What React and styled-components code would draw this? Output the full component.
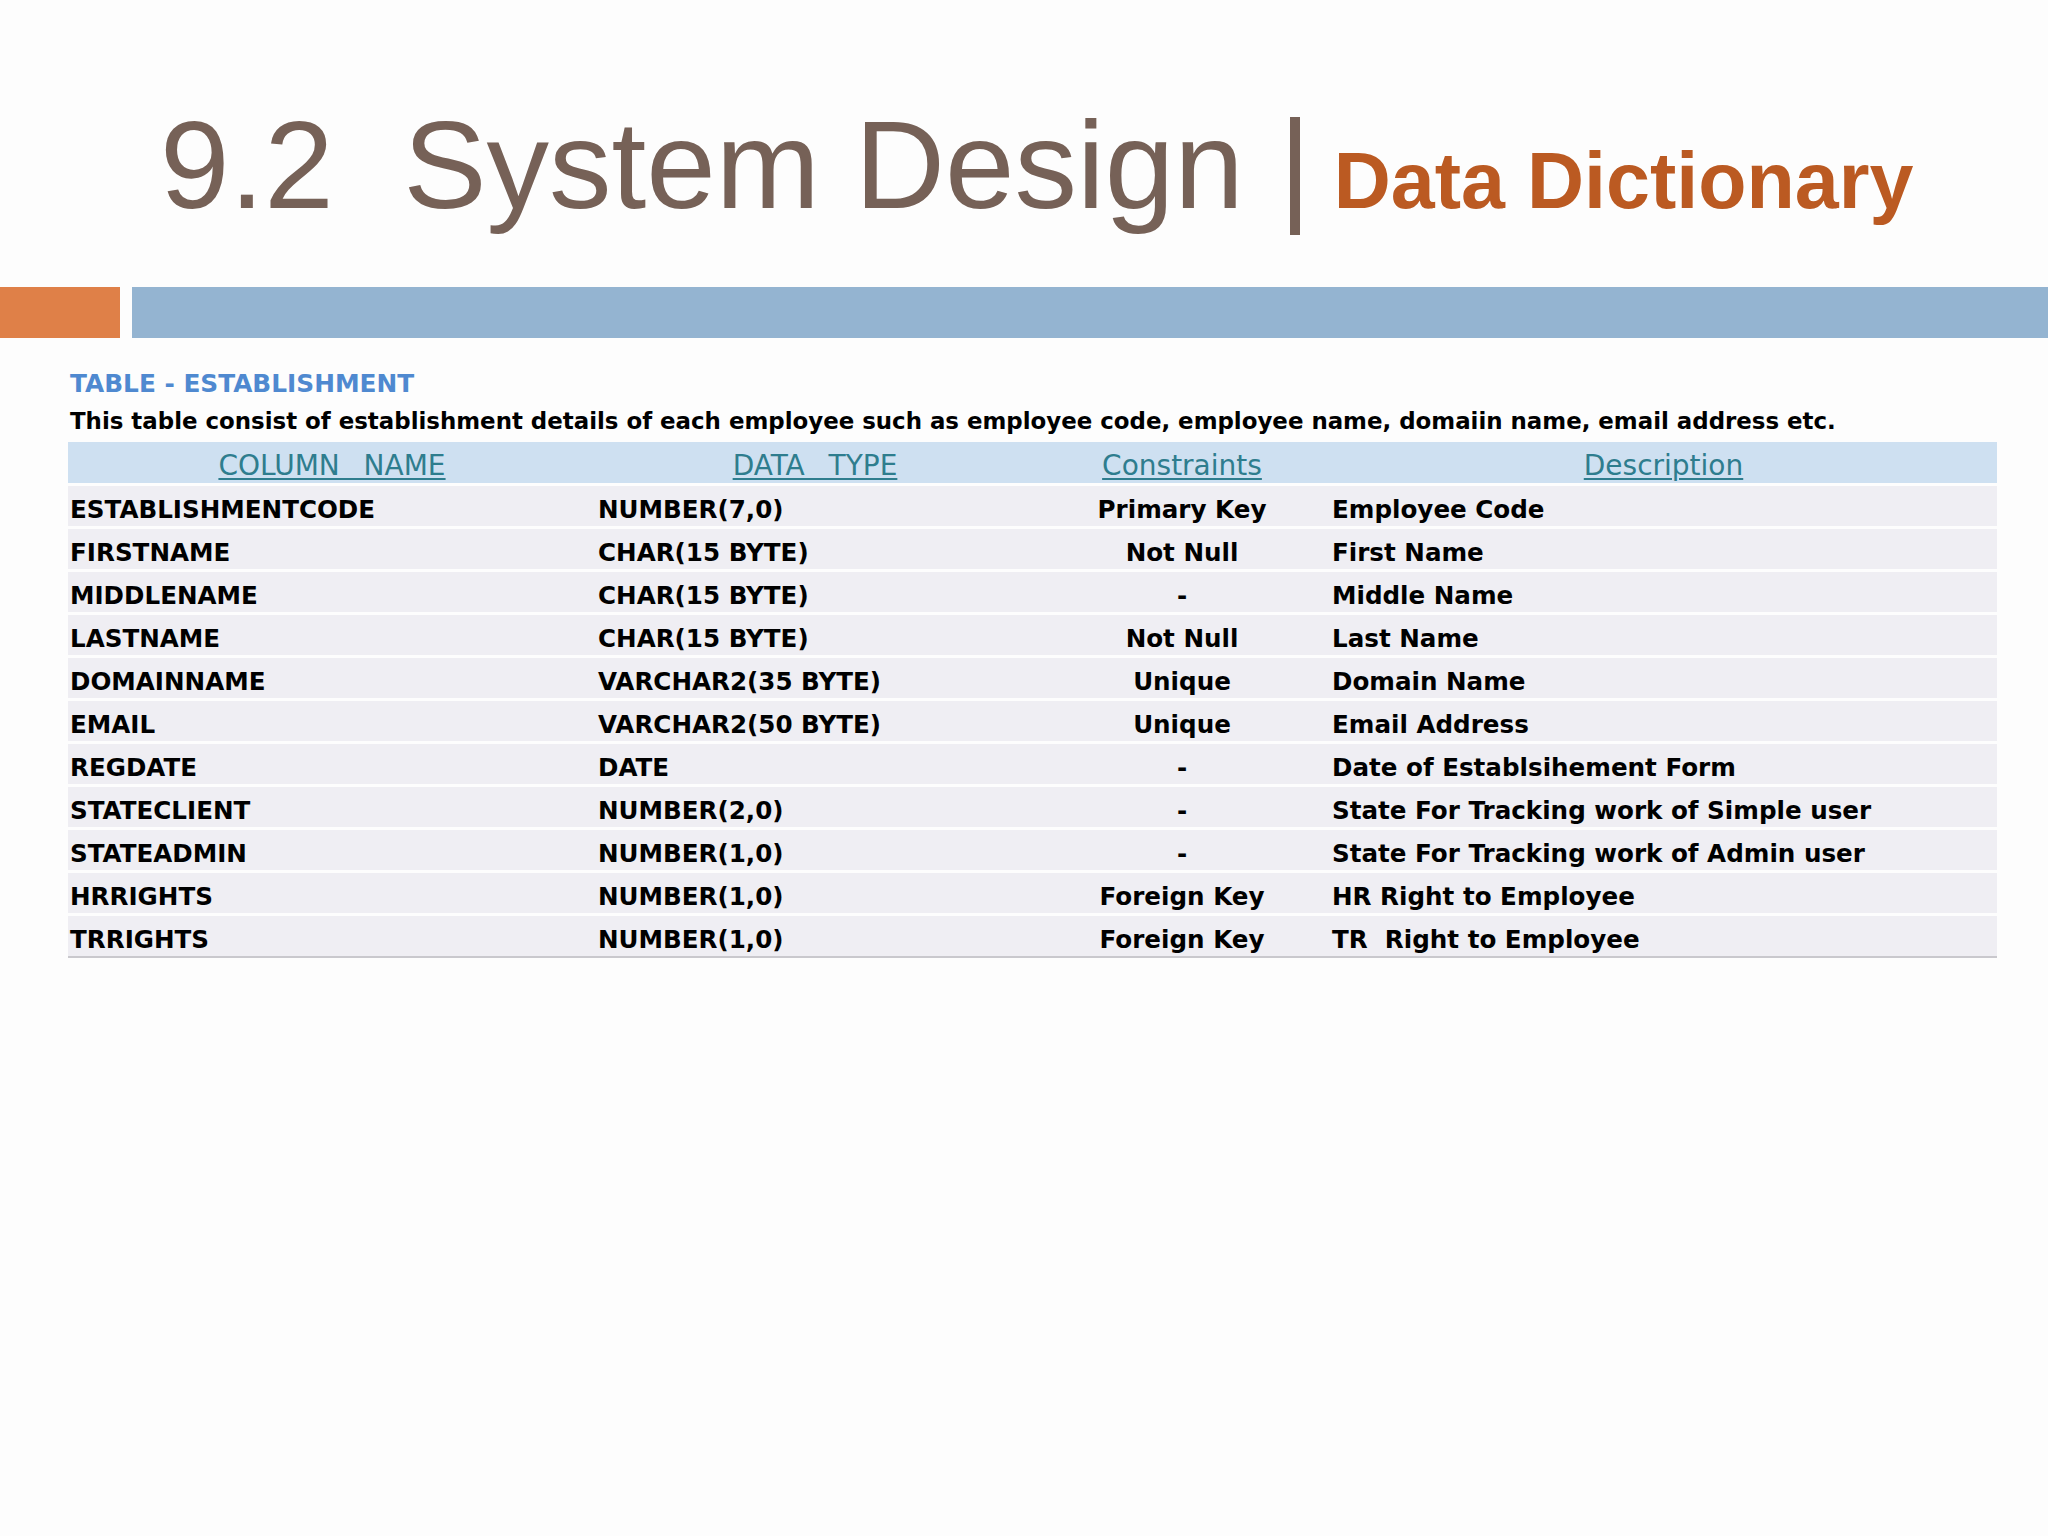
import React from 'react';
import styled, { createGlobalStyle } from 'styled-components';

const GlobalStyle = createGlobalStyle`
    html, body {
        margin: 0;
        padding: 0;
        background: #fdfdfd;
    }
    body {
        width: 2048px;
        height: 1536px;
        overflow: hidden;
    }
`;

const Slide = styled.div`
    width: 2048px;
    height: 1536px;
    background: #fdfdfd;
`;

const TitleRow = styled.header`
    display: flex;
    align-items: baseline;
    padding: 102px 0 0 160px;
    height: 287px;
    box-sizing: border-box;
`;

const MainTitle = styled.h1`
    margin: 0;
    font-family: "Liberation Sans", Arial, sans-serif;
    font-weight: 400;
    font-size: 125px;
    line-height: 125px;
    color: #766157;
    white-space: pre;
`;

const Divider = styled.span`
    align-self: flex-start;
    width: 10px;
    height: 118px;
    margin: 15px 34px 0 46px;
    background: #766157;
`;

const SubTitle = styled.span`
    font-family: "Liberation Sans", Arial, sans-serif;
    font-weight: 700;
    font-size: 79px;
    color: #bb5a22;
`;

const BarStrip = styled.div`
    display: flex;
    gap: 12px;
    height: 51px;
`;

const Bar = styled.div`
    background: ${props => props.color};
    width: ${props => props.width ? props.width + 'px' : 'auto'};
    flex: ${props => props.width ? 'none' : '1'};
`;

const Content = styled.section`
    padding: 31px 51px 0 68px;
    font-family: "DejaVu Sans", Verdana, sans-serif;
    font-weight: 700;
`;

const TableTitle = styled.h2`
    margin: 0 0 0 2px;
    font-size: 24.8px;
    line-height: 30px;
    font-weight: 700;
    color: #4f89d0;
`;

const TableDesc = styled.p`
    margin: 7px 0 6px 2px;
    font-size: 22.9px;
    line-height: 30px;
    color: #000;
    white-space: nowrap;
`;

const Table = styled.div`
    display: flex;
    flex-direction: column;
    border-bottom: 2px solid #c9c8cd;
`;

const Row = styled.div`
    display: grid;
    grid-template-columns: 528px 438px 296px 1fr;
    height: ${props => props.head ? '41px' : '40px'};
    background: ${props => props.head ? '#cee0f1' : '#efeef3'};
    border-top: ${props => props.head ? 'none' : '3px solid #fdfdfd'};
`;

const HeadCell = styled.div`
    padding-top: 7px;
    text-align: center;
    font-weight: 400;
    font-size: 28px;
    line-height: 33px;
    word-spacing: 3px;
    color: #2e7d8e;
    text-decoration: underline;
    text-decoration-thickness: 2px;
    text-underline-offset: 3px;
    white-space: pre;
`;

const Cell = styled.div`
    padding: 7px 2px 0;
    font-size: 24.6px;
    line-height: 33px;
    color: #000;
    text-align: ${props => props.center ? 'center' : 'left'};
    white-space: pre;
`;

const columns = [
    { name: 'ESTABLISHMENTCODE', type: 'NUMBER(7,0)', rule: 'Primary Key', desc: 'Employee Code' },
    { name: 'FIRSTNAME', type: 'CHAR(15 BYTE)', rule: 'Not Null', desc: 'First Name' },
    { name: 'MIDDLENAME', type: 'CHAR(15 BYTE)', rule: '-', desc: 'Middle Name' },
    { name: 'LASTNAME', type: 'CHAR(15 BYTE)', rule: 'Not Null', desc: 'Last Name' },
    { name: 'DOMAINNAME', type: 'VARCHAR2(35 BYTE)', rule: 'Unique', desc: 'Domain Name' },
    { name: 'EMAIL', type: 'VARCHAR2(50 BYTE)', rule: 'Unique', desc: 'Email Address' },
    { name: 'REGDATE', type: 'DATE', rule: '-', desc: 'Date of Establsihement Form' },
    { name: 'STATECLIENT', type: 'NUMBER(2,0)', rule: '-', desc: 'State For Tracking work of Simple user' },
    { name: 'STATEADMIN', type: 'NUMBER(1,0)', rule: '-', desc: 'State For Tracking work of Admin user' },
    { name: 'HRRIGHTS', type: 'NUMBER(1,0)', rule: 'Foreign Key', desc: 'HR Right to Employee' },
    { name: 'TRRIGHTS', type: 'NUMBER(1,0)', rule: 'Foreign Key', desc: 'TR  Right to Employee' },
];

const App = () => {
    return (
        <Slide>
            <GlobalStyle />
            <TitleRow>
                <MainTitle>9.2  System Design</MainTitle>
                <Divider />
                <SubTitle>Data Dictionary</SubTitle>
            </TitleRow>
            <BarStrip>
                <Bar color="#df8048" width={120} />
                <Bar color="#94b4d1" />
            </BarStrip>
            <Content>
                <TableTitle>TABLE - ESTABLISHMENT</TableTitle>
                <TableDesc>
                    This table consist of establishment details of each employee such as employee code, employee name, domaiin name, email address etc.
                </TableDesc>
                <Table>
                    <Row head>
                        <HeadCell>COLUMN  NAME</HeadCell>
                        <HeadCell>DATA  TYPE</HeadCell>
                        <HeadCell>Constraints</HeadCell>
                        <HeadCell>Description</HeadCell>
                    </Row>
                    {columns.map(col => (
                        <Row key={col.name}>
                            <Cell>{col.name}</Cell>
                            <Cell>{col.type}</Cell>
                            <Cell center>{col.rule}</Cell>
                            <Cell>{col.desc}</Cell>
                        </Row>
                    ))}
                </Table>
            </Content>
        </Slide>
    );
};

export default App;
